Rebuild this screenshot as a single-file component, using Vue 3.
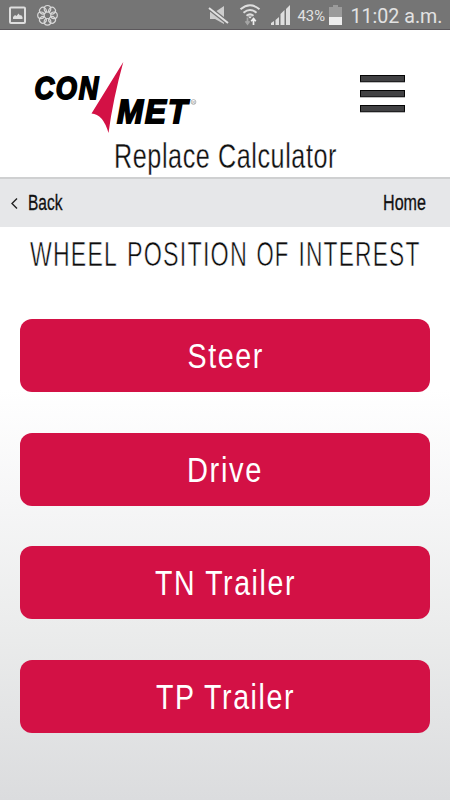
<script setup>
const positions = [
  { label: 'Steer', x: 187.5, width: 76.5 },
  { label: 'Drive', x: 187, width: 76 },
  { label: 'TN Trailer', x: 155, width: 141 },
  { label: 'TP Trailer', x: 156, width: 139 },
]
const condense = 0.655
const headingWords = [
  { text: 'WHEEL', x: 30, width: 88 },
  { text: 'POSITION', x: 127, width: 121 },
  { text: 'OF', x: 256.5, width: 33 },
  { text: 'INTEREST', x: 298.5, width: 122 },
]
const petals = [0, 45, 90, 135, 180, 225, 270, 315]
</script>

<template>
  <div class="screen">
    <div class="status">
      <svg width="450" height="30" viewBox="0 0 450 30">
        <rect x="10" y="7.5" width="15" height="15.5" rx="1" fill="none" stroke="#dedede" stroke-width="2" />
        <path d="M13 19v-2l2-2 1.500 1 2-2.500 1.500 2 1-.5 1.500 2v2z" fill="#dedede" />
        <g fill="none" stroke="#d8d8d8" stroke-width="1.200">
          <circle v-for="a in petals" :key="a" cx="47.500" cy="8.800" r="3.300" :transform="`rotate(${a} 47.5 15.300)`" />
        </g>
        <path d="M210 12h5l9-6v18l-9-5h-5z" fill="#cdcdcd" />
        <path d="M209 8l19 15" stroke="#757575" stroke-width="4.500" />
        <path d="M209 8l19 15" stroke="#e2e2e2" stroke-width="2" />
        <g fill="none" stroke="#dedede" stroke-width="2">
          <path d="M240.500 9.300q9.500-8 19 0" />
          <path d="M243.500 12.700q6.500-5.500 13 0" />
          <path d="M246.500 15.800q3.500-2.800 7 0" />
        </g>
        <path d="M248 16.500h4l-2 2z" fill="#eee" />
        <path d="M247.500 17.500v6m-2-2.200l2 2.700 2-2.700" fill="none" stroke="#a5a5a5" stroke-width="1.700" />
        <path d="M253.500 25v-6m-2.300 2.200l2.300-2.700 2.300 2.700" fill="none" stroke="#eee" stroke-width="1.700" />
        <path d="M271 25v-2l3-2v4zM275.500 25v-5l3.500-3v8zM280.500 25v-11l4-4v15zM286 25V9l4-4v20z" fill="#dedede" />
        <text x="297.500" y="21" font-size="14" textLength="27.500" lengthAdjust="spacingAndGlyphs">43%</text>
        <path d="M333 5h5v2h4v10h-13V7h4z" fill="#9b9b9b" />
        <path d="M329 17h13v8h-13z" fill="#ededed" />
        <text x="350.500" y="22.800" font-size="19.500" textLength="92" lengthAdjust="spacingAndGlyphs">11:02 a.m.</text>
      </svg>
    </div>

    <header class="header">
      <div class="brand">
        <svg class="logo" width="180" height="82" viewBox="25 55 180 82">
          <g class="logo-text">
            <text x="34.500" y="99" font-size="32" textLength="65.500" lengthAdjust="spacingAndGlyphs">CON</text>
            <text x="117" y="123" font-size="33" textLength="72" lengthAdjust="spacingAndGlyphs">MET</text>
          </g>
          <path d="M123.300 62 91.500 113.500Q103 114 108.500 133Q113 99 123.300 62Z" fill="#d31145" stroke="#fff" stroke-width="1.500" paint-order="stroke" />
          <circle cx="193.500" cy="102" r="2.400" fill="none" stroke="#888" stroke-width=".6" />
          <text class="reg" x="192.300" y="103.500" font-size="4">R</text>
        </svg>
        <button class="menu" aria-label="Menu"><i></i><i></i><i></i></button>
      </div>
      <svg class="title" width="450" height="40" viewBox="0 137 450 40">
        <text x="114" y="167.500" font-size="34.500" textLength="223" lengthAdjust="spacingAndGlyphs">Replace Calculator</text>
      </svg>
    </header>

    <nav class="nav">
      <svg width="225" height="48" viewBox="0 179 225 48">
        <path d="M17 198.500l-5 5 5 5" fill="none" stroke="#222" stroke-width="1.400" />
        <text x="28" y="210" font-size="22" textLength="34.500" lengthAdjust="spacingAndGlyphs">Back</text>
      </svg>
      <svg width="225" height="48" viewBox="225 179 225 48">
        <text x="383" y="210" font-size="22" textLength="43" lengthAdjust="spacingAndGlyphs">Home</text>
      </svg>
    </nav>

    <main class="main">
      <svg class="heading" width="450" height="60" viewBox="0 227 450 60">
        <text v-for="w in headingWords" :key="w.text" :transform="`translate(${w.x} 266.3) scale(${condense} 1)`" font-size="35.500" :textLength="w.width / condense" lengthAdjust="spacingAndGlyphs">{{ w.text }}</text>
      </svg>
      <div class="list">
        <button v-for="p in positions" :key="p.label" class="choice">
          <svg width="410" height="73" viewBox="20 0 410 73">
            <text :x="p.x" y="49" font-size="35.500" :textLength="p.width" lengthAdjust="spacingAndGlyphs">{{ p.label }}</text>
          </svg>
        </button>
      </div>
    </main>
  </div>
</template>

<style>
body { margin: 0; }
</style>

<style scoped>
.screen {
  width: 450px;
  height: 800px;
  overflow: hidden;
  display: flex;
  flex-direction: column;
  background: linear-gradient(#fff 0, #fff 390px, #f6f6f7 500px, #ebecec 630px, #dbdcde 800px);
  font-family: Roboto, "Liberation Sans", sans-serif;
}
svg { display: block; overflow: visible; }
button { border: 0; padding: 0; }
.status {
  height: 29px;
  background: #757575;
  border-bottom: 1px solid #5c585c;
  fill: #e2e2e2;
}
.header { height: 147px; }
.brand {
  height: 107px;
  box-sizing: border-box;
  padding: 25px 45px 0 25px;
  display: flex;
  justify-content: space-between;
}
.logo-text {
  font-family: "Liberation Sans", sans-serif;
  font-weight: 700;
  font-style: italic;
  fill: #000;
  stroke: #000;
  stroke-width: 1.8px;
  letter-spacing: 2px;
}
.reg { fill: #888; font-family: "Liberation Sans", sans-serif; }
.menu {
  width: 45px;
  height: 38px;
  margin-top: 20px;
  background: none;
  display: flex;
  flex-direction: column;
  gap: 8px;
}
.menu i {
  box-sizing: border-box;
  width: 45px;
  height: 7px;
  background: #414143;
  border: 1px solid #050505;
  border-bottom-color: #202022;
  box-shadow: 0 1px #bdbdbd;
}
.title {
  font-family: "Liberation Sans", sans-serif;
  fill: #111;
  stroke: #fff;
  stroke-width: .3px;
  letter-spacing: .8px;
}
.nav {
  display: flex;
  background: #e6e7e9;
  border-top: 2px solid #cfd0d1;
  box-sizing: border-box;
  height: 50px;
  fill: #111;
  font-family: "Liberation Sans", sans-serif;
}
.nav text { stroke: #111; stroke-width: .3px; }
.heading {
  font-family: "Liberation Sans", sans-serif;
  fill: #0c0c0c;
  stroke: #fff;
  stroke-width: .6px;
  letter-spacing: 1.8px;
}
.list {
  display: flex;
  flex-direction: column;
  gap: 40.7px;
  padding: 32px 20px 0;
}
.choice {
  height: 73px;
  border-radius: 12px;
  background: #d31145;
  fill: #fff;
  font-family: "Liberation Sans", sans-serif;
  letter-spacing: 2px;
}
</style>
